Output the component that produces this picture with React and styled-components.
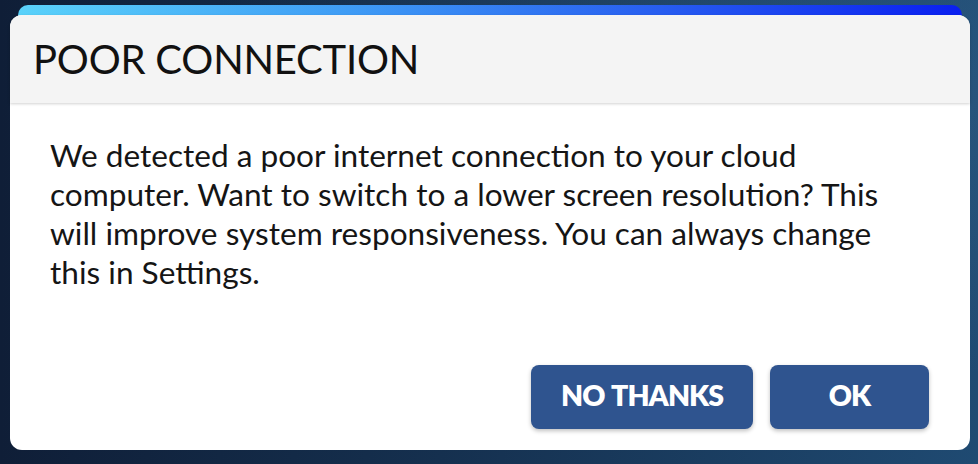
import React from "react";
import styled, { createGlobalStyle } from "styled-components";

const Global = createGlobalStyle`
  html, body { margin: 0; padding: 0; }
  body {
    width: 978px;
    height: 464px;
    overflow: hidden;
    font-family: Lato, "Noto Sans", sans-serif;
  }
`;

const Backdrop = styled.div`
  isolation: isolate;
  width: 978px;
  height: 464px;
  box-sizing: border-box;
  padding: 15px 8px 0 10px;
  background:
    radial-gradient(ellipse at 85% 20%, rgba(60, 110, 150, 0.35), transparent 55%),
    linear-gradient(90deg, #0f1e37 0%, #15304f 45%, #1f4a72 100%);
`;

const Dialog = styled.div`
  position: relative;
  width: 960px;
  height: 435px;
  background: #ffffff;
  border-radius: 12px;
  display: flex;
  flex-direction: column;

  &::before {
    content: "";
    position: absolute;
    z-index: -1;
    top: -10px;
    left: 8px;
    right: 8px;
    height: 24px;
    border-radius: 10px 10px 0 0;
    background: linear-gradient(90deg, #5ad2fa 0%, #3f9cf5 35%, #2a63f0 65%, #0a1ff0 100%);
  }
`;

const Header = styled.div`
  height: 88px;
  box-sizing: border-box;
  padding: 0 23px;
  display: flex;
  align-items: center;
  background: #f4f4f4;
  border-radius: 12px 12px 0 0;
  box-shadow: 0 1px 3px rgba(0, 0, 0, 0.18);
  position: relative;
`;

const Title = styled.h1`
  margin: 0;
  padding-bottom: 1px;
  font-family: Lato, "Noto Sans", sans-serif;
  font-weight: 400;
  font-size: 40px;
  line-height: 48px;
  color: #111111;
  letter-spacing: -0.2px;
`;

const Body = styled.div`
  flex: 1;
  display: flex;
  flex-direction: column;
  padding: 33px 41px 21px 40px;
`;

const Message = styled.p`
  margin: 0;
  font-family: Lato, "Noto Sans", sans-serif;
  font-size: 31.6px;
  line-height: 39px;
  color: #151515;
  white-space: nowrap;
`;

const Actions = styled.div`
  margin-top: auto;
  display: flex;
  justify-content: flex-end;
  gap: 17px;
`;

const Button = styled.button`
  width: ${(p) => p.$w}px;
  height: 64px;
  border: none;
  border-radius: 8px;
  background: #2f548f;
  color: #ffffff;
  font-family: Lato, "Noto Sans", sans-serif;
  font-weight: 800;
  font-size: 28.5px;
  letter-spacing: -1px;
  word-spacing: 2px;
  padding: 0 0 5px;
  box-shadow: 0 2px 4px rgba(0, 0, 0, 0.25);
  cursor: pointer;
`;

export default function App() {
  return (
    <>
      <Global />
      <Backdrop>
        <Dialog>
          <Header>
            <Title>POOR CONNECTION</Title>
          </Header>
          <Body>
            <Message>
              We detected a poor internet connection to your cloud
              <br />
              computer. Want to switch to a lower screen resolution? This
              <br />
              will improve system responsiveness. You can always change
              <br />
              this in Settings.
            </Message>
            <Actions>
              <Button $w={222}>NO THANKS</Button>
              <Button $w={159}>OK</Button>
            </Actions>
          </Body>
        </Dialog>
      </Backdrop>
    </>
  );
}
